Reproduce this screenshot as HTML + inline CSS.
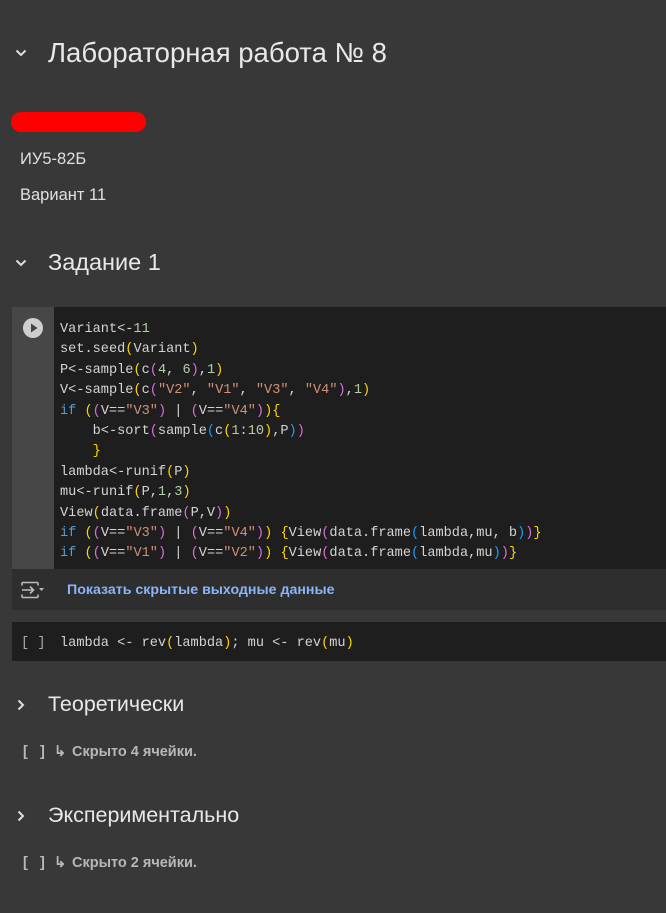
<!DOCTYPE html>
<html><head><meta charset="utf-8"><style>
body{margin:0;width:666px;height:913px;background:#383838;font-family:"Liberation Sans",sans-serif;color:#e3e3e3;position:relative;overflow:hidden}
.a{position:absolute;white-space:nowrap}
.h1{font-size:27.5px;color:#e8e8e8}
.h2{font-size:23.5px;color:#e8e8e8}
.p{font-size:16.5px;color:#e0e0e0}
.code{font-family:"Liberation Mono",monospace;font-size:13.6px;line-height:20.4px;color:#d4d4d4;white-space:pre}
.n{color:#b5cea8}.s{color:#ce9178}.k{color:#569cd6}.g{color:#ffd700}.o{color:#da70d6}.b{color:#179fff}
.hid{font-size:14.5px;font-weight:bold;color:#b8b8b8}
</style></head><body>
<svg class="a" style="left:14px;top:46px" width="14" height="14" viewBox="0 0 14 14"><path d="M2.5 4.5L7 9l4.5-4.5" stroke="#ddd" stroke-width="2" fill="none"/></svg>
<div class="a h1" style="left:48px;top:37px">Лабораторная работа № 8</div>
<div class="a" style="left:11px;top:112px;width:135px;height:20px;border-radius:10px;background:#ff0000"></div>
<div class="a p" style="left:20px;top:150px">ИУ5-82Б</div>
<div class="a p" style="left:20px;top:186px">Вариант 11</div>
<svg class="a" style="left:14px;top:256px" width="14" height="14" viewBox="0 0 14 14"><path d="M2.5 4.5L7 9l4.5-4.5" stroke="#ddd" stroke-width="2" fill="none"/></svg>
<div class="a h2" style="left:48px;top:249px">Задание 1</div>

<div class="a" style="left:12px;top:307px;width:654px;height:262px;background:#1e1e1e"></div>
<div class="a" style="left:12px;top:307px;width:42px;height:262px;background:#474747"></div>
<div class="a" style="left:23px;top:318px;width:20px;height:20px;border-radius:50%;background:#cfcfcf"></div>
<svg class="a" style="left:23px;top:318px" width="20" height="20"><path d="M8 5.5L14.5 10 8 14.5z" fill="#444"/></svg>
<div class="a code" style="left:60px;top:320px">Variant&lt;-<span class="n">11</span>
set.seed<span class="g">(</span>Variant<span class="g">)</span>
P&lt;-sample<span class="g">(</span>c<span class="o">(</span><span class="n">4</span>, <span class="n">6</span><span class="o">)</span>,<span class="n">1</span><span class="g">)</span>
V&lt;-sample<span class="g">(</span>c<span class="o">(</span><span class="s">"V2"</span>, <span class="s">"V1"</span>, <span class="s">"V3"</span>, <span class="s">"V4"</span><span class="o">)</span>,<span class="n">1</span><span class="g">)</span>
<span class="k">if</span> <span class="g">(</span><span class="o">(</span>V==<span class="s">"V3"</span><span class="o">)</span> | <span class="o">(</span>V==<span class="s">"V4"</span><span class="o">)</span><span class="g">)</span><span class="g">{</span>
    b&lt;-sort<span class="o">(</span>sample<span class="b">(</span>c<span class="g">(</span><span class="n">1</span>:<span class="n">10</span><span class="g">)</span>,P<span class="b">)</span><span class="o">)</span>
    <span class="g">}</span>
lambda&lt;-runif<span class="g">(</span>P<span class="g">)</span>
mu&lt;-runif<span class="g">(</span>P,<span class="n">1</span>,<span class="n">3</span><span class="g">)</span>
View<span class="g">(</span>data.frame<span class="o">(</span>P,V<span class="o">)</span><span class="g">)</span>
<span class="k">if</span> <span class="g">(</span><span class="o">(</span>V==<span class="s">"V3"</span><span class="o">)</span> | <span class="o">(</span>V==<span class="s">"V4"</span><span class="o">)</span><span class="g">)</span> <span class="g">{</span>View<span class="o">(</span>data.frame<span class="b">(</span>lambda,mu, b<span class="b">)</span><span class="o">)</span><span class="g">}</span>
<span class="k">if</span> <span class="g">(</span><span class="o">(</span>V==<span class="s">"V1"</span><span class="o">)</span> | <span class="o">(</span>V==<span class="s">"V2"</span><span class="o">)</span><span class="g">)</span> <span class="g">{</span>View<span class="o">(</span>data.frame<span class="b">(</span>lambda,mu<span class="b">)</span><span class="o">)</span><span class="g">}</span></div>

<div class="a" style="left:12px;top:569px;width:654px;height:41px;background:#2e2e2e"></div>
<svg class="a" style="left:21px;top:581px" width="24" height="18" viewBox="0 0 24 18"><path d="M1 1.5h16M1 16.5h16M1 9h11M9 5.5l3.5 3.5L9 12.5M1 1.5v3M1 16.5v-3M17 1.5v3M17 16.5v-3" stroke="#bbb" stroke-width="1.6" fill="none"/><path d="M18 7h5l-2.5 3z" fill="#bbb"/></svg>
<div class="a" style="left:67px;top:582px;font-size:14.2px;font-weight:bold;color:#8ab4f8">Показать скрытые выходные данные</div>

<div class="a" style="left:12px;top:622px;width:654px;height:39px;background:#1e1e1e"></div>
<div class="a code" style="left:21px;top:634px;color:#aaa">[ ]</div>
<div class="a code" style="left:60px;top:634px">lambda &lt;- rev<span class="g">(</span>lambda<span class="g">)</span>; mu &lt;- rev<span class="g">(</span>mu<span class="g">)</span></div>

<svg class="a" style="left:14px;top:698px" width="14" height="14" viewBox="0 0 14 14"><path d="M4.5 2.5L9 7l-4.5 4.5" stroke="#ddd" stroke-width="2" fill="none"/></svg>
<div class="a h2" style="left:48px;top:692px;font-size:21.5px">Теоретически</div>
<div class="a hid" style="left:23px;top:744px">[</div><div class="a hid" style="left:40px;top:744px">]</div><div class="a hid" style="left:54px;top:744px">↳</div><div class="a hid" style="left:72px;top:744px">Скрыто 4 ячейки.</div>
<svg class="a" style="left:14px;top:809px" width="14" height="14" viewBox="0 0 14 14"><path d="M4.5 2.5L9 7l-4.5 4.5" stroke="#ddd" stroke-width="2" fill="none"/></svg>
<div class="a h2" style="left:48px;top:803px;font-size:21.5px">Экспериментально</div>
<div class="a hid" style="left:23px;top:855px">[</div><div class="a hid" style="left:40px;top:855px">]</div><div class="a hid" style="left:54px;top:855px">↳</div><div class="a hid" style="left:72px;top:855px">Скрыто 2 ячейки.</div>
</body></html>
